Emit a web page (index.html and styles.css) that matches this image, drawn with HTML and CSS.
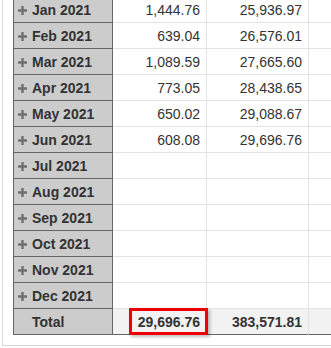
FILE: index.html
```html
<!DOCTYPE html>
<html>
<head>
<meta charset="utf-8">
<link rel="stylesheet" href="styles.css">
</head>
<body>
<div class="frame">
  <table class="pivot">
    <tbody>
      <tr><th><span class="exp"><svg viewBox="0 0 9 9" width="9" height="9"><path d="M0 4.5H9M4.5 0V9" stroke="#707070" stroke-width="2.4"/></svg></span>Jan 2021</th><td>1,444.76</td><td>25,936.97</td><td class="wide"></td></tr>
      <tr><th><span class="exp"><svg viewBox="0 0 9 9" width="9" height="9"><path d="M0 4.5H9M4.5 0V9" stroke="#707070" stroke-width="2.4"/></svg></span>Feb 2021</th><td>639.04</td><td>26,576.01</td><td class="wide"></td></tr>
      <tr><th><span class="exp"><svg viewBox="0 0 9 9" width="9" height="9"><path d="M0 4.5H9M4.5 0V9" stroke="#707070" stroke-width="2.4"/></svg></span>Mar 2021</th><td>1,089.59</td><td>27,665.60</td><td class="wide"></td></tr>
      <tr><th><span class="exp"><svg viewBox="0 0 9 9" width="9" height="9"><path d="M0 4.5H9M4.5 0V9" stroke="#707070" stroke-width="2.4"/></svg></span>Apr 2021</th><td>773.05</td><td>28,438.65</td><td class="wide"></td></tr>
      <tr><th><span class="exp"><svg viewBox="0 0 9 9" width="9" height="9"><path d="M0 4.5H9M4.5 0V9" stroke="#707070" stroke-width="2.4"/></svg></span>May 2021</th><td>650.02</td><td>29,088.67</td><td class="wide"></td></tr>
      <tr><th><span class="exp"><svg viewBox="0 0 9 9" width="9" height="9"><path d="M0 4.5H9M4.5 0V9" stroke="#707070" stroke-width="2.4"/></svg></span>Jun 2021</th><td>608.08</td><td>29,696.76</td><td class="wide"></td></tr>
      <tr><th><span class="exp"><svg viewBox="0 0 9 9" width="9" height="9"><path d="M0 4.5H9M4.5 0V9" stroke="#707070" stroke-width="2.4"/></svg></span>Jul 2021</th><td></td><td></td><td class="wide"></td></tr>
      <tr><th><span class="exp"><svg viewBox="0 0 9 9" width="9" height="9"><path d="M0 4.5H9M4.5 0V9" stroke="#707070" stroke-width="2.4"/></svg></span>Aug 2021</th><td></td><td></td><td class="wide"></td></tr>
      <tr><th><span class="exp"><svg viewBox="0 0 9 9" width="9" height="9"><path d="M0 4.5H9M4.5 0V9" stroke="#707070" stroke-width="2.4"/></svg></span>Sep 2021</th><td></td><td></td><td class="wide"></td></tr>
      <tr><th><span class="exp"><svg viewBox="0 0 9 9" width="9" height="9"><path d="M0 4.5H9M4.5 0V9" stroke="#707070" stroke-width="2.4"/></svg></span>Oct 2021</th><td></td><td></td><td class="wide"></td></tr>
      <tr><th><span class="exp"><svg viewBox="0 0 9 9" width="9" height="9"><path d="M0 4.5H9M4.5 0V9" stroke="#707070" stroke-width="2.4"/></svg></span>Nov 2021</th><td></td><td></td><td class="wide"></td></tr>
      <tr><th><span class="exp"><svg viewBox="0 0 9 9" width="9" height="9"><path d="M0 4.5H9M4.5 0V9" stroke="#707070" stroke-width="2.4"/></svg></span>Dec 2021</th><td></td><td></td><td class="wide"></td></tr>
      <tr class="total"><th>Total</th><td class="hl">29,696.76<span class="annot"></span></td><td>383,571.81</td><td class="wide"></td></tr>
    </tbody>
  </table>
</div>
</body>
</html>
```
FILE: styles.css
```css
html, body {
  margin: 0;
  padding: 0;
  overflow: hidden;
  background: #ffffff;
}
body {
  width: 331px;
  font-family: "Liberation Sans", Arial, sans-serif;
  font-size: 14px;
  color: #333333;
}
.frame {
  margin: -14px 0 0 2px;
  width: 318px;
  border: 1px solid #d6d6d6;
  border-right: none;
  padding: 10px 0 10px 10px;
  background: #ffffff;
  overflow: hidden;
}
.pivot {
  border-collapse: separate;
  border-spacing: 0;
  border-left: 1px solid #666666;
  table-layout: fixed;
  width: 318px;
}
.pivot th,
.pivot td {
  padding: 0;
  box-sizing: border-box;
  white-space: nowrap;
  overflow: visible;
}
.pivot th {
  width: 99px;
  height: 26px;
  background: #cccccc;
  border-right: 1px solid #666666;
  border-bottom: 1px solid #666666;
  text-align: left;
  font-weight: bold;
  color: #333333;
  padding-left: 4px;
}
.pivot td {
  height: 26px;
  text-align: right;
  border-right: 1px solid #e3e3e3;
  border-bottom: 1px solid #e3e3e3;
  padding-right: 6px;
}
.pivot td:nth-child(2) { width: 94px; }
.pivot td:nth-child(3) { width: 102px; }
.pivot td.wide { width: 23px; }
.exp {
  display: inline-block;
  width: 9px;
  height: 9px;
  margin-right: 5px;
  vertical-align: 0;
}
.exp svg { display: block; }
.total th {
  padding-left: 18px;
  border-bottom: 1px solid #666666;
}
.total td {
  background: #f2f2f2;
  font-weight: bold;
  border-bottom: 1px solid #666666;
}
.hl { position: relative; }
.annot {
  position: absolute;
  left: 16px;
  top: -1px;
  width: 79px;
  height: 27px;
  box-sizing: border-box;
  border: 3px solid #ee0000;
  box-shadow: 2px 2px 3px rgba(0, 0, 0, 0.25);
}
```
